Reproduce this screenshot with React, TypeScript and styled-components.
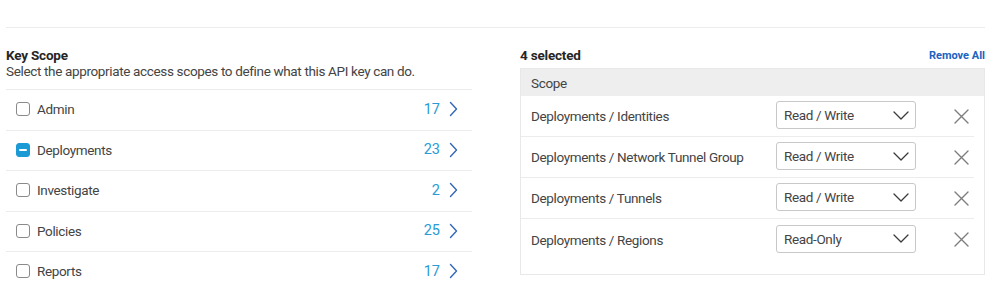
import React from "react";
import styled, { createGlobalStyle } from "styled-components";

const Global = createGlobalStyle`
  html, body { margin: 0; padding: 0; background: #ffffff; }
  body { font-family: Roboto, "Noto Sans", "Liberation Sans", sans-serif; color: #3f3f3f; letter-spacing: -0.35px; }
  * { box-sizing: border-box; }
`;

const Page = styled.div`
  width: 999px;
  padding: 27px 14px 0 6px;
`;

const Divider = styled.div`
  height: 1px;
  background: #ececec;
`;

const Columns = styled.div`
  display: grid;
  grid-template-columns: 466px 465px;
  justify-content: space-between;
  padding-top: 19px;
`;

const Title = styled.div`
  font-size: 13.5px;
  line-height: 16px;
  font-weight: 700;
  color: #262626;
  letter-spacing: -0.2px;
`;

const Subtitle = styled.div`
  font-size: 13.5px;
  line-height: 16px;
  color: #444;
`;

const List = styled.div`
  margin-top: 10px;
  border-top: 1px solid #ececec;
`;

const Row = styled.div`
  display: flex;
  align-items: center;
  height: 40.5px;
  border-bottom: 1px solid #ececec;
  padding: 0 14px 1px 10px;
  font-size: 13.5px;
  color: #444;
`;

const Box = styled.span<{ $checked?: boolean }>`
  width: 14px;
  height: 14px;
  border-radius: 3px;
  border: 1.5px solid ${(p) => (p.$checked ? "#1b9ad6" : "#8a8a8a")};
  background: ${(p) => (p.$checked ? "#1b9ad6" : "#fff")};
  display: inline-flex;
  align-items: center;
  justify-content: center;
  margin-right: 7px;
  flex: none;
`;

const Dash = styled.span`
  width: 8px;
  height: 2px;
  background: #fff;
  border-radius: 1px;
`;

const Label = styled.span`
  flex: 1;
`;

const Count = styled.span`
  color: #2a9bd5;
  font-size: 14.5px;
  margin-right: 9px;
  letter-spacing: 0;
`;

const Header = styled.div`
  display: flex;
  align-items: center;
  justify-content: space-between;
  height: 16px;
`;

const RemoveAll = styled.span`
  color: #2062c0;
  font-size: 11px;
  font-weight: 700;
  letter-spacing: 0;
`;

const Table = styled.div`
  margin-top: 5px;
  border: 1px solid #e8e8e8;
  padding-bottom: 14px;
`;

const HeadRow = styled.div`
  height: 27px;
  background: #eeeeee;
  display: flex;
  align-items: center;
  padding-left: 10px;
  font-size: 13.5px;
  color: #444;
`;

const Body = styled.div`
  margin-right: 10px;
`;

const ScopeRow = styled.div<{ $last?: boolean }>`
  display: grid;
  grid-template-columns: 245px 140px 1fr;
  align-items: center;
  height: 41px;
  padding-left: 10px;
  border-bottom: ${(p) => (p.$last ? "none" : "1px solid #ececec")};
  font-size: 13.5px;
  color: #444;
`;

const Select = styled.div`
  height: 28px;
  border: 1px solid #c8c8c8;
  border-radius: 3px;
  display: flex;
  align-items: center;
  justify-content: space-between;
  padding: 0 6px 0 7px;
  font-size: 13.5px;
  color: #444;
  margin-top: -2px;
`;

const Close = styled.span`
  justify-self: end;
  margin-right: 5px;
  display: inline-flex;
`;

const Chevron = () => (
  <svg width="9" height="16" viewBox="0 0 9 16" fill="none">
    <path d="M1.5 1.5 L7.5 8 L1.5 14.5" stroke="#3467b5" strokeWidth="1.4" strokeLinecap="round" strokeLinejoin="round" />
  </svg>
);

const Down = () => (
  <svg width="16" height="9" viewBox="0 0 16 9" fill="none">
    <path d="M1 1 L8 8 L15 1" stroke="#3a3a3a" strokeWidth="1.3" strokeLinecap="round" strokeLinejoin="round" />
  </svg>
);

const XIcon = () => (
  <svg width="15" height="15" viewBox="0 0 15 15" fill="none">
    <path d="M1 1 L14 14 M14 1 L1 14" stroke="#7d7d7d" strokeWidth="1.4" strokeLinecap="round" />
  </svg>
);

const categories = [
  { name: "Admin", count: 17, checked: false },
  { name: "Deployments", count: 23, checked: true },
  { name: "Investigate", count: 2, checked: false },
  { name: "Policies", count: 25, checked: false },
  { name: "Reports", count: 17, checked: false },
];

const selected = [
  { scope: "Deployments / Identities", access: "Read / Write" },
  { scope: "Deployments / Network Tunnel Group", access: "Read / Write" },
  { scope: "Deployments / Tunnels", access: "Read / Write" },
  { scope: "Deployments / Regions", access: "Read-Only" },
];

export default function App() {
  return (
    <>
      <Global />
      <Page>
        <Divider />
        <Columns>
          <div>
            <Title>Key Scope</Title>
            <Subtitle>Select the appropriate access scopes to define what this API key can do.</Subtitle>
            <List>
              {categories.map((c) => (
                <Row key={c.name}>
                  <Box $checked={c.checked}>{c.checked && <Dash />}</Box>
                  <Label>{c.name}</Label>
                  <Count>{c.count}</Count>
                  <Chevron />
                </Row>
              ))}
            </List>
          </div>
          <div>
            <Header>
              <Title>4 selected</Title>
              <RemoveAll>Remove All</RemoveAll>
            </Header>
            <Table>
              <HeadRow>Scope</HeadRow>
              <Body>
                {selected.map((s, i) => (
                  <ScopeRow key={s.scope} $last={i === selected.length - 1}>
                    <span>{s.scope}</span>
                    <Select>
                      <span>{s.access}</span>
                      <Down />
                    </Select>
                    <Close>
                      <XIcon />
                    </Close>
                  </ScopeRow>
                ))}
              </Body>
            </Table>
          </div>
        </Columns>
      </Page>
    </>
  );
}
